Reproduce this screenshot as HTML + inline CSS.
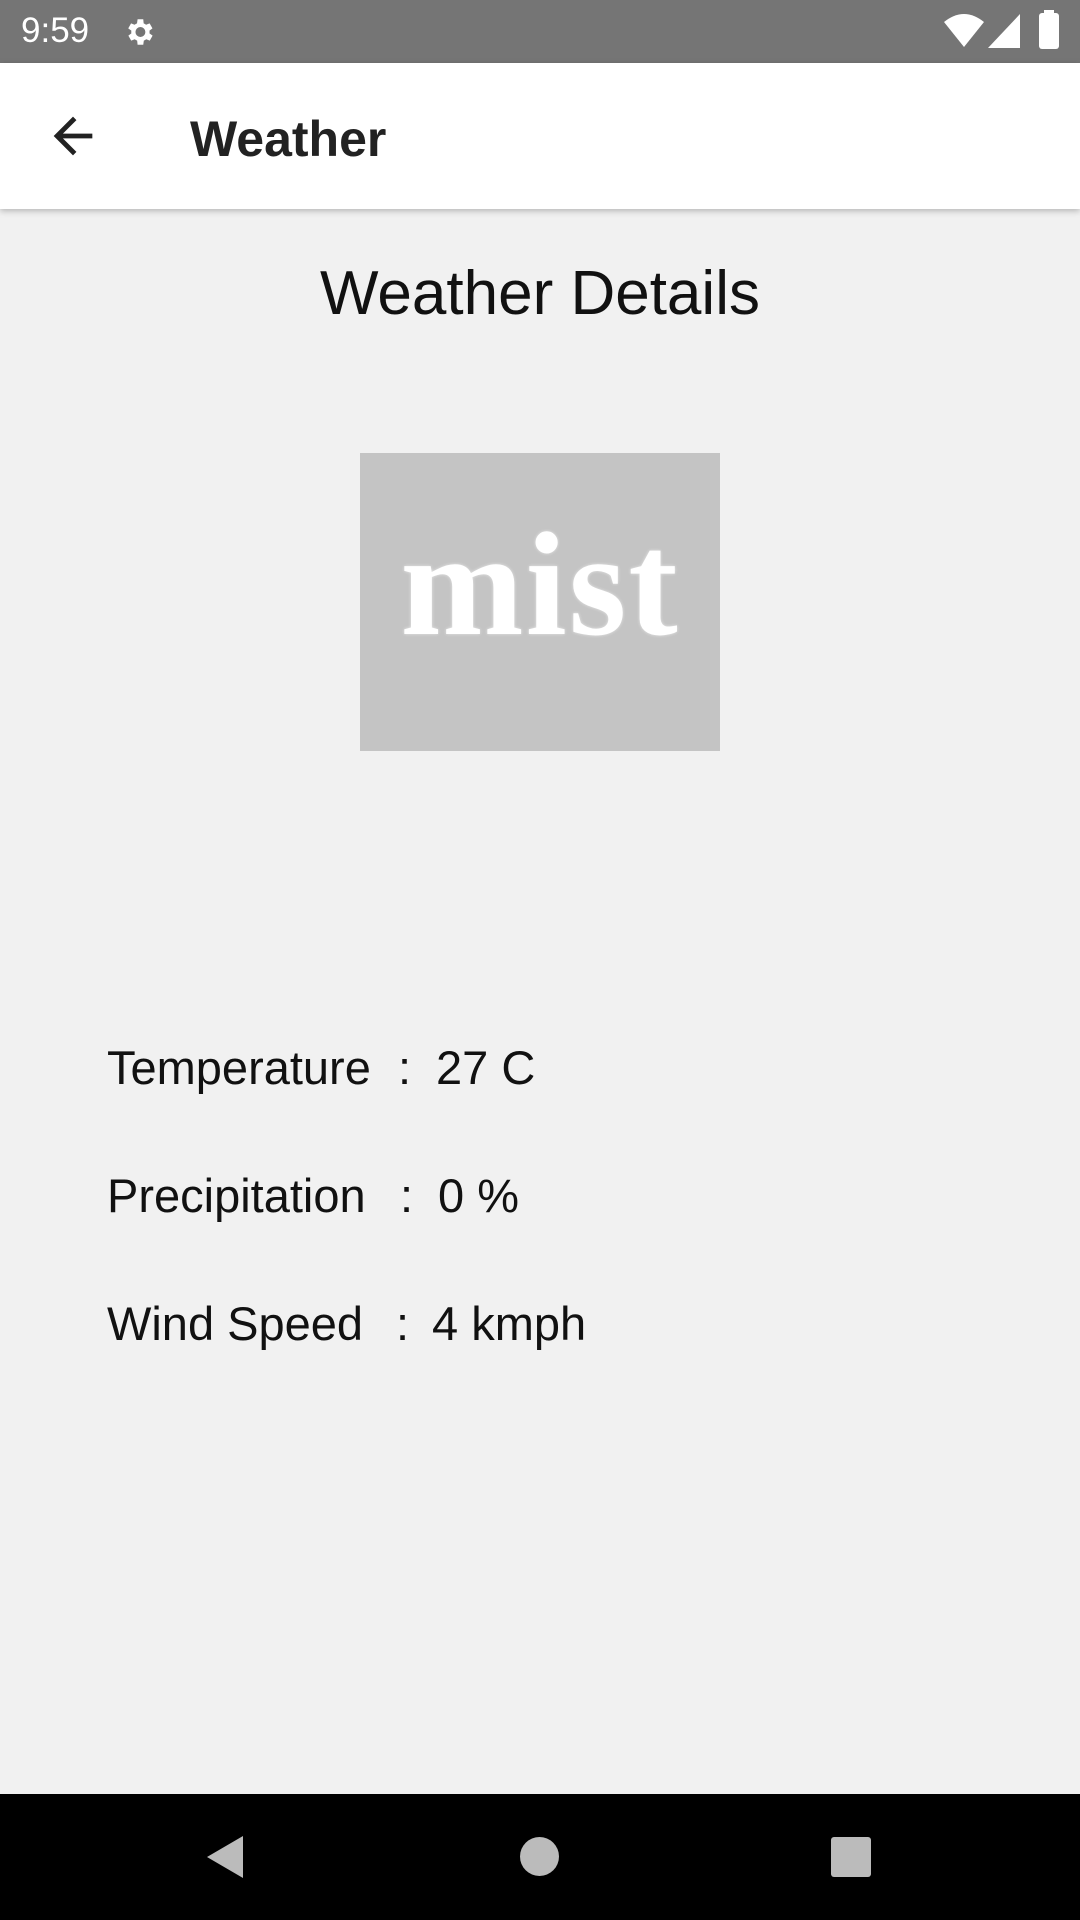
<!DOCTYPE html>
<html><head><meta charset="utf-8"><style>
*{margin:0;padding:0;box-sizing:border-box}
body{width:1080px;height:1920px;background:#f1f1f1;position:relative;overflow:hidden;font-family:"Liberation Sans",sans-serif;color:#111}
.abs{position:absolute}
#sb{left:0;top:0;width:1080px;height:63px;background:#757575;color:#fff}
#ab{left:0;top:63px;width:1080px;height:146px;background:#fff;box-shadow:0 2px 6px rgba(0,0,0,.25)}
#nav{left:0;top:1794px;width:1080px;height:126px;background:#000}
.row{font-size:47px;line-height:60px;white-space:nowrap}
</style></head><body>
<div id="sb" class="abs">
 <div class="abs" style="left:21px;top:10px;font-size:35px;line-height:42px">9:59</div>
 <svg class="abs" style="left:122px;top:15px" width="34" height="34" viewBox="0 0 24 24"><path fill="#fff" d="M19.4 13a7.5 7.5 0 0 0 0-2l2.1-1.6-2-3.5-2.5 1a7 7 0 0 0-1.7-1L15 3h-4l-.4 2.9a7 7 0 0 0-1.7 1l-2.5-1-2 3.5L6.6 11a7.5 7.5 0 0 0 0 2l-2.1 1.6 2 3.5 2.5-1a7 7 0 0 0 1.7 1L11 21h4l.4-2.9a7 7 0 0 0 1.7-1l2.5 1 2-3.5zM13 15.5a3.5 3.5 0 1 1 0-7 3.5 3.5 0 0 1 0 7z"/></svg>
 <svg class="abs" style="left:944px;top:14px" width="40" height="34" viewBox="0 0 40 34"><path fill="#fff" d="M0 8Q20-8 40 8L20 33z"/></svg>
 <svg class="abs" style="left:988px;top:14px" width="32" height="34" viewBox="0 0 32 34"><path fill="#fff" d="M32 0V34H0z"/></svg>
 <div class="abs" style="left:1039px;top:13px;width:20px;height:36px;background:#fff;border-radius:3px"></div>
 <div class="abs" style="left:1044px;top:10px;width:10px;height:4px;background:#fff"></div>
</div>
<div id="ab" class="abs">
 <svg class="abs" style="left:44px;top:44px" width="58" height="58" viewBox="0 0 24 24"><path fill="#222" d="M20 11H7.83l5.59-5.59L12 4l-8 8 8 8 1.41-1.41L7.83 13H20v-2z"/></svg>
 <div class="abs" style="left:190px;top:44px;font-size:50px;line-height:64px;font-weight:bold;color:#222">Weather</div>
</div>
<div class="abs" style="left:0;width:1080px;top:256px;text-align:center;font-size:62px;line-height:76px">Weather Details</div>
<div class="abs" style="left:360px;top:453px;width:360px;height:298px;background:#c4c4c4;overflow:hidden">
 <div class="abs" style="left:0;width:360px;top:62px;text-align:center;font-family:'Liberation Serif',serif;font-weight:bold;font-size:148px;line-height:140px;color:#fff;letter-spacing:2px;text-shadow:0 0 3px rgba(255,255,255,.6)">mist</div>
</div>
<div class="abs row" style="left:107px;top:1038px">Temperature</div>
<div class="abs row" style="left:398px;top:1038px">:</div>
<div class="abs row" style="left:436px;top:1038px">27 C</div>
<div class="abs row" style="left:107px;top:1166px">Precipitation</div>
<div class="abs row" style="left:400px;top:1166px">:</div>
<div class="abs row" style="left:438px;top:1166px">0 %</div>
<div class="abs row" style="left:107px;top:1294px">Wind Speed</div>
<div class="abs row" style="left:396px;top:1294px">:</div>
<div class="abs row" style="left:432px;top:1294px">4 kmph</div>
<div id="nav" class="abs">
 <svg class="abs" style="left:205px;top:40px" width="40" height="46" viewBox="0 0 40 46"><path fill="#bbb" d="M38 2V44L2 23z"/></svg>
 <div class="abs" style="left:520px;top:43px;width:39px;height:39px;border-radius:50%;background:#bbb"></div>
 <div class="abs" style="left:831px;top:43px;width:40px;height:40px;border-radius:3px;background:#bbb"></div>
</div>
</body></html>
